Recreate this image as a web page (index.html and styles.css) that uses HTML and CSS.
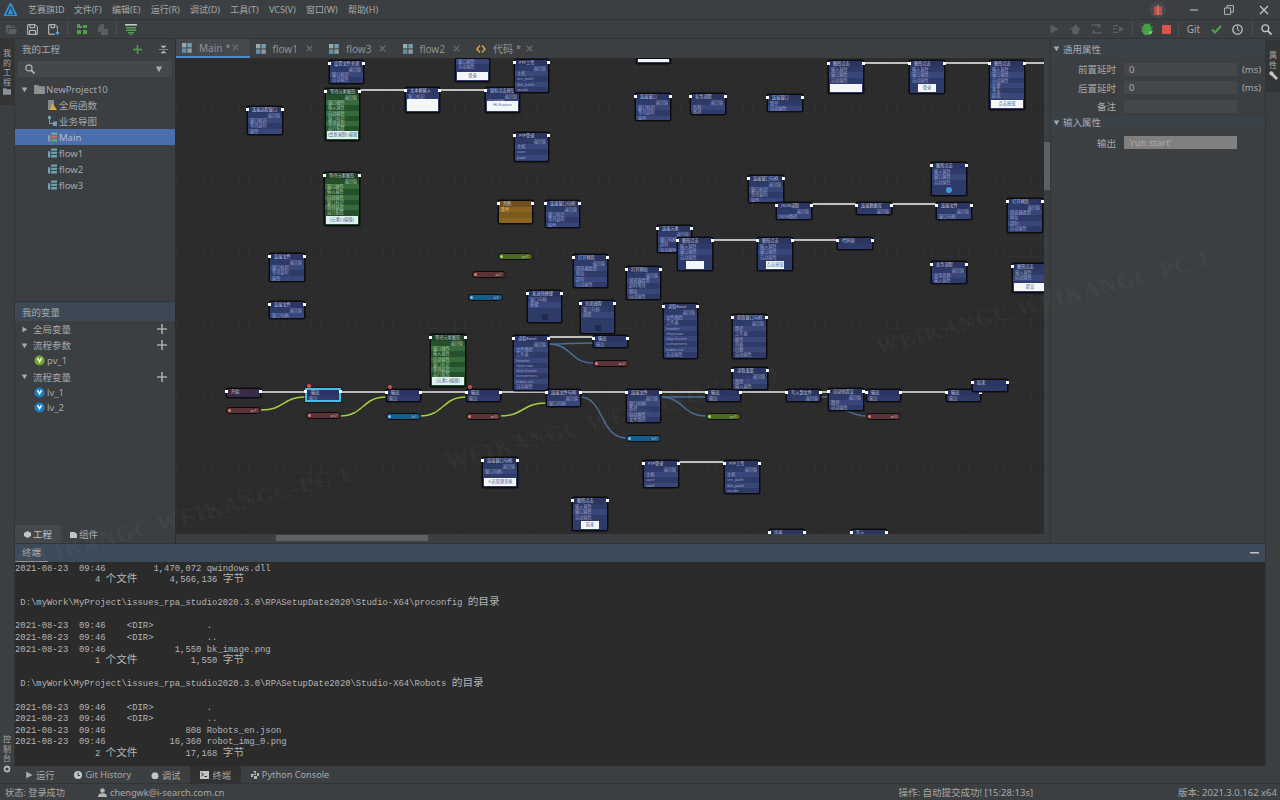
FILE: index.html
```html
<!DOCTYPE html>
<html lang="zh-CN">
<head>
    <meta charset="UTF-8">
    <title>艺赛旗ID</title>
    <link rel="stylesheet" href="styles.css">
</head>
<body>
    <svg class="defs" width="0" height="0">
        <symbol id="ic-grid" viewBox="0 0 10 10">
            <rect x="0" y="0" width="4.4" height="4.4" fill="#9aa7ad"/>
            <rect x="5.4" y="0" width="4.4" height="4.4" fill="#6f9fb5"/>
            <rect x="0" y="5.4" width="4.4" height="4.4" fill="#5f93a8"/>
            <rect x="5.4" y="5.4" width="4.4" height="4.4" fill="#8d9ba2"/>
        </symbol>
        <symbol id="ic-flow" viewBox="0 0 10 10">
            <path d="M0 3h2.5v7H0zM3.5 0H10v2.6H3.5zM3.5 3.6H10v2.6H3.5zM3.5 7.3H10V10H3.5z" fill="#6f9fb5"/>
        </symbol>
        <symbol id="ic-main" viewBox="0 0 10 10">
            <path d="M0 3h2.5v7H0z" fill="#8d9ba2"/>
            <path d="M3.5 0H10v2.6H3.5z" fill="#7fa0a8"/>
            <path d="M3.5 3.6H10v2.6H3.5z" fill="#c9695a"/>
            <path d="M3.5 7.3H10V10H3.5z" fill="#6fa55f"/>
        </symbol>
        <symbol id="ic-down" viewBox="0 0 10 10"><path d="M1 2h8L5 9z" fill="#a9a9a9"/></symbol>
        <symbol id="ic-right" viewBox="0 0 10 10"><path d="M2 1l7 4-7 4z" fill="#a9a9a9"/></symbol>
        <symbol id="ic-plus" viewBox="0 0 10 10"><path d="M4.2 0h1.6v4.2H10v1.6H5.8V10H4.2V5.8H0V4.2h4.2z" fill="currentColor"/></symbol>
        <symbol id="ic-close" viewBox="0 0 10 10"><path d="M1 1l8 8M9 1l-8 8" stroke="#6e7274" stroke-width="1.5"/></symbol>
        <symbol id="ic-var" viewBox="0 0 12 12">
            <circle cx="6" cy="6" r="5.5" fill="currentColor"/>
            <path d="M3 3.6h2l1 2.2 1-2.2h2L6 9z" fill="#fff"/>
        </symbol>
        <symbol id="ic-folder" viewBox="0 0 12 10"><path d="M0 0h4.5l1.2 1.5H12V10H0z" fill="#8d9194"/></symbol>
        <symbol id="ic-play" viewBox="0 0 10 10"><path d="M1.5 0.5l8 4.5-8 4.5z" fill="currentColor"/></symbol>
    </svg>

    <header class="titlebar">
        <svg class="logo" width="13" height="13" viewBox="0 0 13 13">
            <path d="M6.5 0.5L12.5 12.5H0.5z" fill="none" stroke="#2f93dc" stroke-width="1.7"/>
            <path d="M6.5 5L9.2 11H3.8z" fill="#2f93dc"/>
        </svg>
        <span class="app-name">艺赛旗ID</span>
        <nav class="menu">
            <span>文件(F)</span><span>编辑(E)</span><span>运行(R)</span><span>调试(D)</span>
            <span>工具(T)</span><span>VCS(V)</span><span>窗口(W)</span><span>帮助(H)</span>
        </nav>
        <div class="window-buttons">
            <span class="gift"><svg width="8" height="10" viewBox="0 0 8 10"><path d="M0 1.5h8V10H0z" fill="#b5504c"/><path d="M3.4 0h1.2v10H3.4z" fill="#d98a84"/></svg></span>
            <svg class="win-btn" width="10" height="10" viewBox="0 0 10 10"><path d="M1 5h8" stroke="#b5b5b5" stroke-width="1.2"/></svg>
            <svg class="win-btn" width="10" height="10" viewBox="0 0 10 10"><path d="M0.6 3h6v6.4h-6zM3 3V0.6h6.4V7H6.6" fill="none" stroke="#b5b5b5"/></svg>
            <svg class="win-btn" width="10" height="10" viewBox="0 0 10 10"><path d="M1 1l8 8M9 1l-8 8" stroke="#c4c4c4" stroke-width="1.2"/></svg>
        </div>
    </header>

    <div class="toolbar">
        <span class="tool"><svg width="11" height="9" viewBox="0 0 11 9"><path d="M0 0h4l1 1.2h4V3H2.4L1 9H0zM3 4h8L9.4 9H1.7z" fill="#5a5e60"/></svg></span>
        <span class="tool"><svg width="11" height="11" viewBox="0 0 11 11"><path d="M0.7 0.7h7.6l2 2v7.6H0.7zM3 0.7v3h4.6v-3M2.6 10.2V6.4h5.8v3.8" fill="none" stroke="#c8c8c8"/></svg></span>
        <span class="tool"><svg width="12" height="11" viewBox="0 0 12 11"><path d="M0.7 0.7h6.6l2 2v2.6M7 10.2H0.7V0.7M3 0.7v3h3.6v-3" fill="none" stroke="#c8c8c8"/><path d="M9.5 6v3M8 8.2l1.5 2 1.5-2" fill="none" stroke="#5fa7d6" stroke-width="1.2"/></svg></span>
        <span class="tool-sep"></span>
        <span class="tool"><svg width="12" height="11" viewBox="0 0 12 11"><path d="M1 0h3v2h2v2H1zM7 1h4v3H7zM1 6h4v4H1zM7 6h4v4H7z" fill="#4ea24a"/></svg></span>
        <span class="tool"><svg width="11" height="11" viewBox="0 0 11 11"><path d="M1 3l3-3h3v5h4v6H4V8H1z" fill="#5a5e60"/></svg></span>
        <span class="tool-sep"></span>
        <span class="tool"><svg width="12" height="11" viewBox="0 0 12 11"><path d="M0 0h12v1.6H0z" fill="#c8c8c8"/><path d="M1 3h10v1.5H1zM1 5.5h10V7H1zM3 8h6v1.5H3zM5 10h2v1H5z" fill="#4ea24a"/></svg></span>
        <div class="toolbar-right">
            <span class="tool dim"><svg width="10" height="10"><use href="#ic-play"/></svg></span>
            <span class="tool"><svg width="11" height="11" viewBox="0 0 11 11"><path d="M3 3l2.5-3L8 3l3 2-2 1v3L5.5 11 2 9V6L0 5z" fill="#5a5e60"/></svg></span>
            <span class="tool"><svg width="11" height="10" viewBox="0 0 11 10"><path d="M0.5 1h8v3M10.5 9h-8V6M7 0l2 1.5L7 3M4 7L2 8.5 4 10" fill="none" stroke="#5a5e60" stroke-width="1.3"/></svg></span>
            <span class="tool"><svg width="11" height="10" viewBox="0 0 11 10"><path d="M0 1h5v1.3H0zM0 4.3h3v1.3H0zM0 7.7h5V9H0z" fill="#5a5e60"/><path d="M6 2l5 3-5 3z" fill="#5a5e60"/></svg></span>
            <span class="tool-sep"></span>
            <span class="tool"><svg width="12" height="12" viewBox="0 0 12 12"><path d="M2 5a4 4 0 0 1 8 0v4a3 3 0 0 1-2 2.5H4A3 3 0 0 1 2 9zM0 4l2 1.5M12 4l-2 1.5M0 8h2M12 8h-2M3.5 1L2.5 0M8.5 1l1-1" fill="#45a048" stroke="#45a048"/><circle cx="9.5" cy="9.5" r="1.5" fill="#7dd87a"/></svg></span>
            <span class="tool stop"><svg width="9" height="9"><rect width="9" height="9" rx="1" fill="#d9534f"/></svg></span>
            <span class="tool-sep"></span>
            <span class="git">Git</span>
            <span class="tool"><svg width="11" height="9" viewBox="0 0 11 9"><path d="M1 4.5L4 7.5 10 1" fill="none" stroke="#4ea24a" stroke-width="2"/></svg></span>
            <span class="tool"><svg width="11" height="11" viewBox="0 0 11 11"><circle cx="5.5" cy="5.5" r="4.7" fill="none" stroke="#c8c8c8" stroke-width="1.2"/><path d="M5.5 2.5v3.2l2 1.2" fill="none" stroke="#c8c8c8"/></svg></span>
            <span class="tool-sep"></span>
            <span class="tool"><svg width="11" height="11" viewBox="0 0 11 11"><circle cx="4.3" cy="4.3" r="3.4" fill="none" stroke="#c8c8c8" stroke-width="1.3"/><path d="M6.8 6.8L10.5 10.5" stroke="#c8c8c8" stroke-width="1.8"/></svg></span>
        </div>
    </div>

    <div class="workspace">
        <aside class="rail">
            <div class="rail-tab rail-project">
                <span>我</span><span>的</span><span>工</span><span>程</span>
                <svg width="8" height="7"><use href="#ic-folder"/></svg>
            </div>
            <div class="rail-tab rail-console">
                <span>控</span><span>制</span><span>台</span>
                <svg width="8" height="8" viewBox="0 0 8 8"><circle cx="4" cy="4" r="2.5" fill="none" stroke="#b5b5b5" stroke-width="1.8"/></svg>
            </div>
        </aside>

        <div class="center">
            <div class="top-row">
                <section class="left-panel">
                    <div class="panel-head">
                        <span>我的工程</span>
                        <svg class="head-plus" width="9" height="9"><use href="#ic-plus"/></svg>
                        <svg class="head-collapse" width="9" height="9" viewBox="0 0 9 9"><path d="M0 4.5h9M2 1h5L4.5 3zM2 8h5L4.5 6z" fill="#b5b5b5" stroke="#b5b5b5" stroke-width="0.6"/></svg>
                    </div>
                    <div class="search">
                        <svg width="10" height="10" viewBox="0 0 11 11"><circle cx="4.3" cy="4.3" r="3.4" fill="none" stroke="#b5b5b5" stroke-width="1.3"/><path d="M6.8 6.8L10.5 10.5" stroke="#b5b5b5" stroke-width="1.8"/></svg>
                        <svg width="8" height="8"><use href="#ic-down"/></svg>
                    </div>
                    <ul class="tree">
                        <li class="tree-root"><svg class="tri" width="7" height="7"><use href="#ic-down"/></svg><svg class="root-icon" width="11" height="9"><use href="#ic-folder"/></svg>NewProject10</li>
                        <li class="tree-leaf"><svg width="9" height="10" viewBox="0 0 9 10"><path d="M0 0h6v10H0z" fill="#7f8a8f"/><path d="M4.5 3L9 10H1.5z" fill="#d9a441"/></svg>全局函数</li>
                        <li class="tree-leaf"><svg width="9" height="10" viewBox="0 0 9 10"><path d="M0 0h3v3H0zM1 3h1v4h3v1H1zM5 5.5h4V10H5z" fill="#6f9fb5"/></svg>业务导图</li>
                        <li class="tree-leaf selected"><svg width="9" height="10"><use href="#ic-main"/></svg>Main</li>
                        <li class="tree-leaf"><svg width="9" height="10"><use href="#ic-flow"/></svg>flow1</li>
                        <li class="tree-leaf"><svg width="9" height="10"><use href="#ic-flow"/></svg>flow2</li>
                        <li class="tree-leaf"><svg width="9" height="10"><use href="#ic-flow"/></svg>flow3</li>
                    </ul>
                    <div class="vars">
                        <div class="panel-head vars-head">我的变量</div>
                        <div class="var-group"><svg class="tri" width="7" height="7"><use href="#ic-right"/></svg><span>全局变量</span><svg class="var-add" width="10" height="10"><use href="#ic-plus"/></svg></div>
                        <div class="var-group"><svg class="tri" width="7" height="7"><use href="#ic-down"/></svg><span>流程参数</span><svg class="var-add" width="10" height="10"><use href="#ic-plus"/></svg></div>
                        <div class="var-item param"><svg width="11" height="11"><use href="#ic-var"/></svg>pv_1</div>
                        <div class="var-group"><svg class="tri" width="7" height="7"><use href="#ic-down"/></svg><span>流程变量</span><svg class="var-add" width="10" height="10"><use href="#ic-plus"/></svg></div>
                        <div class="var-item local"><svg width="11" height="11"><use href="#ic-var"/></svg>lv_1</div>
                        <div class="var-item local"><svg width="11" height="11"><use href="#ic-var"/></svg>lv_2</div>
                    </div>
                    <div class="panel-tabs">
                        <span class="panel-tab active"><svg width="7" height="7" viewBox="0 0 7 7"><path d="M3.5 0L7 2v3L3.5 7 0 5V2z" fill="#c4c4c4"/></svg>工程</span>
                        <span class="panel-tab"><svg width="7" height="7" viewBox="0 0 7 7"><path d="M0 1h4.5L7 3v4H0z" fill="#c4c4c4"/></svg>组件</span>
                    </div>
                </section>

                <section class="editor">
                    <div class="tabs">
                        <div class="tab active"><svg width="10" height="10"><use href="#ic-grid"/></svg><span>Main</span><i>*</i><svg class="tab-close" width="7" height="7"><use href="#ic-close"/></svg></div>
                        <div class="tab"><svg width="10" height="10"><use href="#ic-grid"/></svg><span>flow1</span><svg class="tab-close" width="7" height="7"><use href="#ic-close"/></svg></div>
                        <div class="tab"><svg width="10" height="10"><use href="#ic-grid"/></svg><span>flow3</span><svg class="tab-close" width="7" height="7"><use href="#ic-close"/></svg></div>
                        <div class="tab"><svg width="10" height="10"><use href="#ic-grid"/></svg><span>flow2</span><svg class="tab-close" width="7" height="7"><use href="#ic-close"/></svg></div>
                        <div class="tab"><svg width="10" height="10" viewBox="0 0 10 10"><path d="M0 5l3.5-4 1 1L2 5l2.5 3-1 1zM10 5L6.5 1l-1 1L8 5 5.5 8l1 1z" fill="#d9a441"/></svg><span>代码</span><i>*</i><svg class="tab-close" width="7" height="7"><use href="#ic-close"/></svg></div>
                    </div>
                    <div class="canvas" id="canvas">
                        <svg class="wires" width="868" height="476" viewBox="176 58 868 476">
                            <g class="wire-white">
                                <path d="M359 90H405M439 90H485M548 337H593M712 240H757M792 240H837M678 462H724"/>
                                <path d="M811 204H856M891 204H936M863 63H909M944 63H989M1024 63H1044"/>
                            </g>
                            <g class="wire-main">
                                <path d="M261 392H305M340 392H386M420 392H466M500 392H546M580 392H626M660 392H706M740 392H786M820 392H828M863 392H866M900 392H946"/>
                            </g>
                            <g class="wire-green">
                                <path d="M261 410C285 410 282 397 305 397"/>
                                <path d="M340 416C364 416 362 397 386 397"/>
                                <path d="M420 416C444 416 442 397 466 397"/>
                                <path d="M500 416C524 416 522 403 546 403"/>
                            </g>
                            <g class="wire-blue">
                                <path d="M548 344C570 344 572 343 593 343"/>
                                <path d="M548 344C572 344 570 363 593 363"/>
                                <path d="M580 397C604 397 600 438 626 438"/>
                                <path d="M660 397H706"/>
                                <path d="M660 397C684 397 682 416 706 416"/>
                                <path d="M820 397H828"/>
                                <path d="M843 410C852 412 856 416 866 416"/>
                            </g>
                        </svg>
                    </div>
                    <div class="hscroll"><div class="hscroll-thumb"></div></div>
                </section>

                <div class="vscroll"><div class="vscroll-thumb"></div></div>

                <section class="props">
                    <div class="prop-head"><svg width="7" height="7"><use href="#ic-down"/></svg>通用属性</div>
                    <div class="prop-group">
                        <div class="prop-row"><label>前置延时</label><div class="prop-input">0</div><span>(ms)</span></div>
                        <div class="prop-row"><label>后置延时</label><div class="prop-input">0</div><span>(ms)</span></div>
                        <div class="prop-row"><label>备注</label><div class="prop-input"></div></div>
                    </div>
                    <div class="prop-head second"><svg width="7" height="7"><use href="#ic-down"/></svg>输入属性</div>
                    <div class="prop-group output">
                        <div class="prop-row"><label>输出</label><div class="prop-input filled">'run start'</div></div>
                    </div>
                </section>
            </div>

            <section class="terminal">
                <div class="terminal-head">
                    <span class="terminal-title">终端</span>
                    <svg width="9" height="2"><rect width="9" height="1.5" fill="#c4c4c4"/></svg>
                </div>
<pre class="terminal-body">2021-08-23  09:46         1,470,072 qwindows.dll
               4 <b>个文件</b>      4,566,136 <b>字节</b>

 D:\myWork\MyProject\issues_rpa_studio2020.3.0\RPASetupDate2020\Studio-X64\proconfig <b>的目录</b>

2021-08-23  09:46    &lt;DIR&gt;          .
2021-08-23  09:46    &lt;DIR&gt;          ..
2021-08-23  09:46             1,550 bk_image.png
               1 <b>个文件</b>          1,550 <b>字节</b>

 D:\myWork\MyProject\issues_rpa_studio2020.3.0\RPASetupDate2020\Studio-X64\Robots <b>的目录</b>

2021-08-23  09:46    &lt;DIR&gt;          .
2021-08-23  09:46    &lt;DIR&gt;          ..
2021-08-23  09:46               808 Robots_en.json
2021-08-23  09:46            16,360 robot_img_0.png
               2 <b>个文件</b>         17,168 <b>字节</b></pre>
            </section>
        </div>

        <aside class="rail rail-right">
            <div class="rail-tab rail-props">
                <span>属</span><span>性</span>
                <svg width="9" height="9" viewBox="0 0 9 9"><path d="M0 2l2-2 2 1 1 2 4 4-2 2-4-4-2-1z" fill="#c4c4c4"/></svg>
            </div>
        </aside>

        <div class="watermark wm-1">WEIKANGC WEIKANGC-PC 1</div>
        <div class="watermark wm-2">WEIKANGC WEIKANGC-PC 1</div>
        <div class="watermark wm-3">WEIKANGC WEIKANGC-PC 1</div>
    </div>

    <div class="bottom-tabs">
        <span class="bottom-tab"><svg width="8" height="8"><use href="#ic-play"/></svg>运行</span>
        <span class="bottom-tab"><svg width="8" height="8" viewBox="0 0 8 8"><circle cx="4" cy="4" r="4" fill="#c4c4c4"/><path d="M4 1.5v3h2" stroke="#3c3f41" fill="none"/></svg>Git History</span>
        <span class="bottom-tab"><svg width="8" height="8" viewBox="0 0 8 8"><path d="M2 1.5h4L7.5 4v2L6 8H2L.5 6V4z" fill="#c4c4c4"/></svg>调试</span>
        <span class="bottom-tab active"><svg width="9" height="8" viewBox="0 0 9 8"><path d="M0 0h9v8H0z" fill="#c4c4c4"/><path d="M1.5 2l2 1.5-2 1.5M4.5 5.5H7" stroke="#2b2b2b" fill="none"/></svg>终端</span>
        <span class="bottom-tab"><svg width="8" height="8" viewBox="0 0 8 8"><path d="M2 0h3v3H0V6h2V4h3V3zM3 5h3V2h2v3H6v3H3z" fill="#b5b5b5"/></svg>Python Console</span>
    </div>

    <footer class="statusbar">
        <span class="status-left">状态: 登录成功</span>
        <span class="status-user"><svg width="9" height="9" viewBox="0 0 9 9"><circle cx="4.5" cy="2.5" r="2.3" fill="#b5b5b5"/><path d="M0 9c0-3 2-3.8 4.5-3.8S9 6 9 9z" fill="#b5b5b5"/></svg>chengwk@i-search.com.cn</span>
        <span class="status-op">操作: 自动提交成功! [15:28:13s]</span>
        <span class="status-version">版本: 2021.3.0.162 x64</span>
    </footer>

    <script src="canvas.js"></script>
</body>
</html>
```

FILE: styles.css
```css
* {
    box-sizing: border-box;
}

body {
    margin: 0;
    width: 1280px;
    height: 800px;
    overflow: hidden;
    display: flex;
    flex-direction: column;
    background-color: #3c3f41;
    color: #a6a8aa;
    font-family: "Noto Sans", "Noto Sans CJK SC", sans-serif;
    font-size: 9.5px;
}

svg {
    flex-shrink: 0;
    display: block;
}

.defs {
    position: absolute;
}

/* title bar and toolbar */
.titlebar {
    height: 20px;
    display: flex;
    align-items: center;
    padding-left: 4px;
    font-size: 9px;
    border-bottom: 1px solid #323436;
}

.app-name {
    margin-left: 11px;
}

.menu {
    display: flex;
    gap: 10.3px;
    margin-left: 9px;
}

.window-buttons {
    margin-left: auto;
    display: flex;
    align-items: center;
    padding-right: 11px;
}

.gift {
    width: 16px;
    height: 16px;
    border-radius: 8px;
    background-color: #47494b;
    display: flex;
    align-items: center;
    justify-content: center;
    margin-right: 23px;
}

.win-btn {
    margin-right: 25px;
}

.win-btn:last-child {
    margin-right: 0;
}

.toolbar {
    height: 19px;
    display: flex;
    align-items: center;
    padding-left: 1px;
    border-bottom: 1px solid #323436;
}

.toolbar-right {
    margin-left: auto;
    display: flex;
    align-items: center;
    padding-right: 3px;
}

.tool {
    width: 21px;
    height: 18px;
    display: flex;
    align-items: center;
    justify-content: center;
}

.toolbar-right .tool {
    width: 21.5px;
}

.toolbar-right .tool.stop {
    width: 17px;
}

.tool.dim {
    color: #5a5e60;
}

.tool-sep {
    width: 1px;
    height: 14px;
    margin: 0 3px;
    background-color: #4c4f51;
}

.git {
    width: 24px;
    text-align: center;
    font-size: 10px;
}

/* main area */
.workspace {
    position: relative;
    height: 727px;
    display: flex;
}

.rail {
    width: 15px;
    background-color: #3c3f41;
    border-right: 1px solid #323436;
    position: relative;
    display: flex;
    flex-direction: column;
}

.rail-right {
    border-right: 0;
    border-left: 1px solid #323436;
}

.rail-tab {
    display: flex;
    flex-direction: column;
    align-items: center;
    font-size: 8px;
    line-height: 9.5px;
    color: #a6a8aa;
}

.rail-project {
    height: 66px;
    padding-top: 9px;
    background-color: #323436;
}

.rail-project svg,
.rail-props svg {
    margin-top: 2px;
}

.rail-console {
    margin-top: auto;
    margin-bottom: -9px;
    height: 41px;
}

.rail-console svg {
    margin-top: 2px;
}

.rail-props {
    margin-top: 1px;
    height: 52px;
    padding-top: 10px;
    background-color: #323436;
}

.center {
    flex: 1;
    min-width: 0;
    display: flex;
    flex-direction: column;
}

.top-row {
    height: 504px;
    display: flex;
}

/* project panel */
.left-panel {
    width: 161px;
    display: flex;
    flex-direction: column;
    border-right: 1px solid #2b2b2b;
}

.panel-head {
    height: 20px;
    flex-shrink: 0;
    display: flex;
    align-items: center;
    padding-left: 7px;
}

.head-plus {
    margin-left: auto;
    color: #4ea24a;
}

.head-collapse {
    margin-left: 17px;
    margin-right: 7px;
}

.search {
    height: 16px;
    margin: 2px 3px 0;
    padding: 0 9px 0 7px;
    background-color: #45484a;
    display: flex;
    align-items: center;
    justify-content: space-between;
    flex-shrink: 0;
}

.tree {
    list-style: none;
    margin: 0;
    padding: 4px 0 0;
    flex: 1;
}

.tree li {
    height: 16px;
    display: flex;
    align-items: center;
}

.tree-root {
    padding-left: 6px;
}

.tri {
    margin-right: 6px;
}

.root-icon {
    margin-right: 1px;
}

.tree-leaf {
    padding-left: 33px;
}

.tree-leaf svg {
    margin-right: 2px;
}

.tree-leaf.selected {
    background-color: #4b6eaf;
    color: #b4bccb;
}

.vars {
    height: 224px;
    flex-shrink: 0;
    border-top: 1px solid #323436;
}

.vars-head {
    background-color: #3c4854;
    height: 19px;
}

.var-group {
    height: 16px;
    display: flex;
    align-items: center;
    padding-left: 6px;
}

.var-group .tri {
    margin-right: 5px;
}

.var-item {
    height: 15.5px;
    display: flex;
    align-items: center;
    padding-left: 19px;
}

.var-add {
    margin-left: auto;
    margin-right: 8px;
    color: #a9a9a9;
}

.var-item svg {
    margin-right: 2px;
}

.param svg {
    color: #74a82c;
}

.local svg {
    color: #1d7fc4;
}

.panel-tabs {
    height: 18px;
    flex-shrink: 0;
    display: flex;
    align-items: center;
}

.panel-tab {
    height: 18px;
    width: 46px;
    display: flex;
    align-items: center;
    justify-content: center;
    gap: 2px;
}

.panel-tab.active {
    background-color: #45484a;
    color: #c0c2c4;
}

/* flow editor */
.editor {
    width: 868px;
    display: flex;
    flex-direction: column;
}

.tabs {
    height: 19px;
    display: flex;
    font-size: 10px;
    color: #8f9294;
    flex-shrink: 0;
}

.tab {
    width: 73.5px;
    display: flex;
    align-items: center;
    padding-left: 6px;
    position: relative;
}

.tab span {
    margin-left: 7px;
}

.tab i {
    font-style: normal;
    margin-left: 3px;
    font-size: 9px;
}

.tab-close {
    position: absolute;
    left: 56px;
    top: 6px;
}

.tab.active {
    background-color: #45484c;
    border-bottom: 2px solid #4a88c7;
}

.tab.active .tab-close {
    top: 5px;
}

.canvas {
    position: relative;
    width: 868px;
    height: 476px;
    overflow: hidden;
    background-color: #2b2b2b;
    background-image:
        linear-gradient(#2f2f2f 1px, transparent 1px),
        linear-gradient(90deg, #2f2f2f 1px, transparent 1px);
    background-size: 9px 9px;
}

.wires {
    position: absolute;
    left: 0;
    top: 0;
}

.wires path {
    fill: none;
}

.wire-white path {
    stroke: #f2f2f2;
    stroke-width: 1.5;
}

.wire-main path {
    stroke: #b9b9b9;
    stroke-width: 2;
}

.wire-green path {
    stroke: #a6cf3e;
    stroke-width: 1.5;
}

.wire-blue path {
    stroke: #4a6c96;
    stroke-width: 1.5;
}

.node {
    position: absolute;
    background-color: #2e3a68;
    border: 1px solid #0c0c10;
    box-shadow: 0 0 0 0.5px #0c0c10;
    border-radius: 2px;
    font-size: 4.2px;
    line-height: 5.25px;
    color: #9aa3c8;
    overflow: hidden;
}

.node-title {
    height: 6px;
    padding-left: 4px;
    white-space: nowrap;
    overflow: hidden;
    color: #c0c6dc;
    background-color: #2a3562;
}

.node-value {
    height: 5px;
    text-align: right;
    padding-right: 2px;
}

.node-row {
    height: 5.25px;
    padding-left: 2px;
    white-space: nowrap;
    overflow: hidden;
}

.node-row:nth-child(odd) {
    background-color: #38467a;
}

.node-foot {
    position: absolute;
    left: 1px;
    right: 1px;
    bottom: 1px;
    height: 8px;
    line-height: 8px;
    background-color: #f4f6f8;
    color: #3a5d9a;
    text-align: center;
}

.mark-badge,
.mark-square {
    position: absolute;
    left: 50%;
    bottom: 2px;
    margin-left: -3px;
    width: 6px;
    height: 6px;
}

.mark-badge {
    border-radius: 3px;
    background-color: #3f9ad6;
}

.mark-square {
    background-color: #20294a;
}

.node-green {
    background-color: #25502c;
    color: #a8c8ac;
}

.node-green .node-title {
    background-color: #1f4326;
}

.node-green .node-row:nth-child(odd) {
    background-color: #356a3c;
}

.node-green .node-foot {
    background-color: #dff2ee;
}

.node-orange {
    background-color: #8a6320;
    color: #e0c890;
}

.node-orange .node-title {
    background-color: #6e4f1c;
}

.node-orange .node-row:nth-child(odd) {
    background-color: #7b5a20;
}

.node-start {
    background-color: #3a2a4a;
}

.node-start .node-title {
    background-color: #3a2a4a;
}

.node-selected {
    border: 2px solid #3fc0ea;
    border-radius: 0;
}

.pin {
    position: absolute;
    width: 3px;
    height: 3px;
    background-color: #fff;
}

.trigger {
    position: absolute;
    width: 4px;
    height: 4px;
    border-radius: 2px;
    background-color: #c9544f;
}

.pill {
    position: absolute;
    height: 7px;
    border: 1px solid #0c0c10;
    border-radius: 4px;
    font-size: 4.2px;
    line-height: 5px;
    color: #c4c4c4;
    text-align: right;
    padding-right: 3px;
}

.pill::before {
    content: "";
    position: absolute;
    left: 1px;
    top: 1px;
    width: 3px;
    height: 3px;
    border-radius: 2px;
    background-color: #e0807a;
}

.pill-red {
    background-color: #5c3234;
}

.pill-blue {
    background-color: #125f8c;
}

.pill-blue::before {
    background-color: #7fc4ea;
}

.pill-green {
    background-color: #4a6a20;
}

.pill-green::before {
    background-color: #a8d870;
}

.hscroll {
    height: 8px;
    padding: 1px 0 1px 100px;
    background-color: #3c3f41;
}

.hscroll-thumb {
    width: 152px;
    height: 6px;
    background-color: #5e6163;
}

.vscroll {
    width: 6px;
    padding-top: 103px;
    background-color: #3c3f41;
}

.vscroll-thumb {
    height: 48px;
    background-color: #5e6163;
}

/* properties */
.props {
    width: 215px;
    border-left: 1px solid #333537;
}

.prop-head {
    height: 19px;
    display: flex;
    align-items: center;
    gap: 3px;
    padding-left: 2px;
    background-color: #3a4249;
}

.prop-head.second {
    height: 13px;
}

.prop-group {
    padding-top: 2px;
}

.prop-group.output {
    padding-top: 5px;
}

.prop-row {
    height: 18.5px;
    display: flex;
    align-items: center;
}

.prop-row label {
    width: 65px;
    text-align: right;
}

.prop-input {
    width: 113px;
    height: 13px;
    margin-left: 8px;
    margin-right: 5px;
    padding-left: 5px;
    line-height: 13px;
    background-color: #45484a;
}

.prop-input.filled {
    background-color: #808080;
    color: #a9a9a9;
}

/* terminal */
.terminal {
    height: 223px;
    display: flex;
    flex-direction: column;
}

.terminal-head {
    height: 19px;
    display: flex;
    align-items: center;
    justify-content: space-between;
    padding-right: 6px;
    background-color: #3d4a59;
    border-top: 1px solid #323436;
}

.terminal-title {
    width: 33px;
    height: 18px;
    line-height: 17px;
    text-align: center;
    border-bottom: 1px solid #8f9294;
}

.terminal-body {
    flex: 1;
    margin: 0;
    padding-top: 1.5px;
    background-color: #2b2b2b;
    color: #b4b4b4;
    font-family: "Liberation Mono", "Noto Sans CJK SC", monospace;
    font-size: 8.9px;
    line-height: 11.6px;
    overflow: hidden;
}

.terminal-body b {
    font-weight: normal;
    font-size: 10.67px;
    line-height: 0;
    font-family: "Noto Sans CJK SC", sans-serif;
}

/* watermarks */
.watermark {
    position: absolute;
    font-family: "Liberation Serif", serif;
    font-weight: bold;
    font-size: 22px;
    letter-spacing: 1.5px;
    white-space: nowrap;
    color: rgba(255, 255, 255, 0.04);
    transform: rotate(-15deg);
    transform-origin: left bottom;
    pointer-events: none;
}

.wm-1 {
    left: 20px;
    top: 510px;
}

.wm-2 {
    left: 450px;
    top: 410px;
}

.wm-3 {
    left: 880px;
    top: 295px;
}

/* bottom */
.bottom-tabs {
    height: 18px;
    display: flex;
    padding-left: 15px;
    font-size: 9.2px;
    border-bottom: 1px solid #323436;
}

.bottom-tab {
    display: flex;
    align-items: center;
    gap: 3px;
    padding: 0 10px;
    height: 17px;
}

.bottom-tab.active {
    background-color: #2f3133;
}

.statusbar {
    height: 16px;
    display: flex;
    align-items: center;
    font-size: 9.2px;
    padding-left: 5px;
}

.status-user {
    margin-left: 33px;
    display: flex;
    align-items: center;
    gap: 3px;
}

.status-op {
    margin-left: auto;
    font-size: 9.5px;
}

.status-version {
    margin-left: 145px;
    padding-right: 3px;
    font-size: 9.5px;
}
```

FILE: canvas.js
```js
const ATTRS = ['输入属性', '窗口属性', '自动属性'];
const WINDOW = ['窗口标识', '等待延时', '属性'];
const CHECK = ['窗口操作', '输入属性', '自动属性', '窗口标识', '等待延迟', '运行配置'];
const EXCEL = ['文件路径', '工作表', 'header', 'skiprows', 'skip footer', 'converters', 'index col', '自动属性'];

// x, y, w, h, title, value row, rows, options (page coordinates)
const nodes = [
    [329, 60, 35, 24, '设置文件关闭', 1, ['窗口标识', '自动属性']],
    [325, 88, 35, 53, '等待元素图形', 1, CHECK, {kind: 'green', foot: '[重新录制]-编辑'}],
    [405, 87, 35, 26, '文本框输入', 0, ['窗口标识'], {tall: 12, foot: ''}],
    [485, 87, 35, 26, '鼠标点击按钮', 1, ['自动属性'], {tall: 10, foot: 'Hi-Fusion'}],
    [455, 58, 35, 24, '', 0, ['窗口属性', '自动属性'], {foot: '登录'}],
    [514, 59, 35, 34, 'FTP上传', 1, ['主机', 'src_path', 'dst_path', 'mode']],
    [514, 132, 35, 30, 'FTP登录', 1, ['主机', 'user', 'pwd']],
    [247, 106, 36, 29, '连接远程窗口', 1, WINDOW],
    [324, 172, 36, 54, '等待元素图形', 1, CHECK, {kind: 'green', foot: '[元素]-[编辑]'}],
    [498, 200, 35, 24, '判断', 0, ['条件', '', ''], {kind: 'orange'}],
    [545, 200, 35, 28, '连接窗口句柄', 1, WINDOW],
    [527, 290, 35, 33, '发送快捷键', 0, ['窗口句柄', '按键'], {mark: 'square'}],
    [573, 254, 35, 34, '打开网页', 1, ['浏览器类型', '网址', '超时', '自动属性']],
    [580, 300, 35, 34, '关闭进程', 0, ['窗口句柄', '进程'], {mark: 'square'}],
    [626, 266, 35, 34, '打开网站', 1, ['浏览器类型', '超时等待', '网址', '自动属性']],
    [657, 225, 35, 28, '连接元素', 1, ['窗口句柄', '超时', '自动属性']],
    [677, 237, 36, 34, '图形点击', 0, ATTRS, {foot: '', small: true}],
    [663, 303, 35, 56, '读取Excel', 1, EXCEL],
    [732, 314, 35, 45, '获取窗口句柄', 1, ['路径', '工作表', '操作', '列表', '行数', '自动属性']],
    [513, 335, 36, 56, '读取Excel', 1, EXCEL],
    [593, 335, 35, 13, '输出', 0, ['输出']],
    [430, 334, 36, 53, '等待元素图形', 1, CHECK, {kind: 'green', foot: '[元素]-[编辑]'}],
    [226, 388, 35, 10, '开始', 0, [], {kind: 'start'}],
    [305, 388, 36, 14, '输出', 0, ['输出'], {selected: true, trigger: true}],
    [386, 389, 35, 13, '输出', 0, ['输出'], {trigger: true}],
    [466, 389, 35, 13, '输出', 0, ['输出'], {trigger: true}],
    [546, 389, 35, 18, '连接文件句柄', 1, ['窗口句柄']],
    [626, 389, 35, 34, '连接文件', 1, ['窗口句柄', '路径', '自动属性', '文件路径']],
    [706, 389, 35, 13, '输出', 0, ['输出']],
    [732, 367, 36, 23, '读取变量', 1, ['路径', '输入属性']],
    [786, 389, 35, 13, '写入到文件', 1, []],
    [828, 388, 36, 23, '自动化提交', 1, ['路径', '自动属性']],
    [866, 389, 35, 13, '输出', 0, ['输出']],
    [946, 389, 35, 13, '输出', 0, ['输出']],
    [972, 379, 36, 13, '结束', 0, []],
    [269, 253, 36, 29, '连接文件', 1, WINDOW],
    [269, 301, 36, 18, '连接文件', 1, ['窗口句柄']],
    [757, 237, 36, 34, '图形点击', 0, ATTRS, {foot: '点击按钮', small: true}],
    [837, 237, 36, 13, '代码块', 0, []],
    [931, 261, 36, 23, '业务流程', 1, ['业务名称', '输入属性']],
    [1012, 263, 36, 30, '图形点击', 0, ['输入属性', '自动属性'], {foot: '提交'}],
    [828, 60, 36, 34, '图形点击', 0, ATTRS, {foot: ''}],
    [909, 60, 36, 34, '图形点击', 0, ATTRS, {foot: '登录', small: true}],
    [989, 60, 36, 50, '图形点击', 0, ['输入属性', '窗口属性', '自动属性', '左键', '单击', '延迟'], {foot: '点击按钮'}],
    [767, 94, 36, 18, '连接窗口', 0, ['路径', '自动属性']],
    [748, 175, 36, 28, '连接窗口句柄', 1, WINDOW],
    [776, 202, 36, 18, 'JSON读取', 1, ['JSON路径']],
    [856, 202, 36, 13, '连接数据库', 1, []],
    [936, 202, 36, 18, '连接文件', 1, ['窗口句柄']],
    [931, 162, 36, 34, '图形点击', 0, ATTRS, {mark: 'badge'}],
    [1007, 198, 36, 35, '打开网页', 1, ['浏览器类型', '网址', '超时', '自动属性']],
    [635, 93, 36, 28, '连接窗口', 1, WINDOW],
    [690, 93, 36, 22, '业务流程', 1, ['名称', '路径']],
    [636, 58, 35, 6, '', 0, [], {foot: ''}],
    [482, 457, 36, 31, '连接窗口句柄', 1, ['窗口句柄'], {foot: '人员管理系统'}],
    [643, 460, 36, 28, 'FTP登录', 1, ['主机', 'user', 'pwd']],
    [724, 460, 36, 34, 'FTP上传', 1, ['主机', 'src_path', 'dst_path', 'mode']],
    [572, 497, 36, 34, '图形点击', 0, ATTRS, {foot: '前来', small: true}],
    [769, 529, 36, 14, '连接', 0, []],
    [851, 529, 36, 14, '写入', 0, []]
];

// x, y, w, colour, label
const pills = [
    [498, 253, 35, 'green', 'pv1'],
    [472, 271, 34, 'red', 'ar1'],
    [468, 294, 35, 'blue', 'lv1'],
    [593, 360, 36, 'red', 'ar2'],
    [226, 407, 35, 'red', 'ar1'],
    [306, 412, 35, 'red', 'ar2'],
    [386, 413, 35, 'blue', 'lv1'],
    [466, 413, 35, 'red', 'ar3'],
    [626, 435, 35, 'blue', 'lv1'],
    [706, 413, 35, 'green', 'pv1'],
    [866, 413, 35, 'red', 'ar3']
];

const canvas = document.getElementById('canvas');

function addPin(x, y) {
    let pin = document.createElement('div');
    pin.className = 'pin';
    pin.style.left = (x - 176) + 'px';
    pin.style.top = (y - 58) + 'px';
    canvas.appendChild(pin);
}

for (let [x, y, w, h, title, hasValue, rows, opts] of nodes) {
    opts = opts || {};
    let node = document.createElement('div');
    node.className = 'node';
    if (opts.kind) node.classList.add('node-' + opts.kind);
    if (opts.selected) node.classList.add('node-selected');
    node.style.left = (x - 176) + 'px';
    node.style.top = (y - 58) + 'px';
    node.style.width = w + 'px';
    node.style.height = h + 'px';

    if (title) {
        let head = document.createElement('div');
        head.className = 'node-title';
        head.textContent = title;
        node.appendChild(head);
    }
    if (hasValue) {
        let value = document.createElement('div');
        value.className = 'node-value';
        value.textContent = '返回值';
        node.appendChild(value);
    }
    for (let label of rows) {
        let row = document.createElement('div');
        row.className = 'node-row';
        row.textContent = label;
        node.appendChild(row);
    }
    if (opts.foot !== undefined) {
        let foot = document.createElement('div');
        foot.className = 'node-foot';
        foot.textContent = opts.foot;
        if (opts.tall) foot.style.height = opts.tall + 'px';
        if (opts.small) {
            foot.style.left = '8px';
            foot.style.right = '8px';
        }
        node.appendChild(foot);
    }
    if (opts.mark) {
        let mark = document.createElement('div');
        mark.className = 'mark-' + opts.mark;
        node.appendChild(mark);
    }
    canvas.appendChild(node);

    if (title) {
        addPin(x - 1, y + 2);
        addPin(x + w - 2, y + 2);
    }
    if (opts.trigger) {
        let dot = document.createElement('div');
        dot.className = 'trigger';
        dot.style.left = (x - 176 + 2) + 'px';
        dot.style.top = (y - 58 - 4) + 'px';
        canvas.appendChild(dot);
    }
}

for (let [x, y, w, colour, label] of pills) {
    let pill = document.createElement('div');
    pill.className = 'pill pill-' + colour;
    pill.style.left = (x - 176) + 'px';
    pill.style.top = (y - 58) + 'px';
    pill.style.width = w + 'px';
    pill.textContent = label;
    canvas.appendChild(pill);
}
```
